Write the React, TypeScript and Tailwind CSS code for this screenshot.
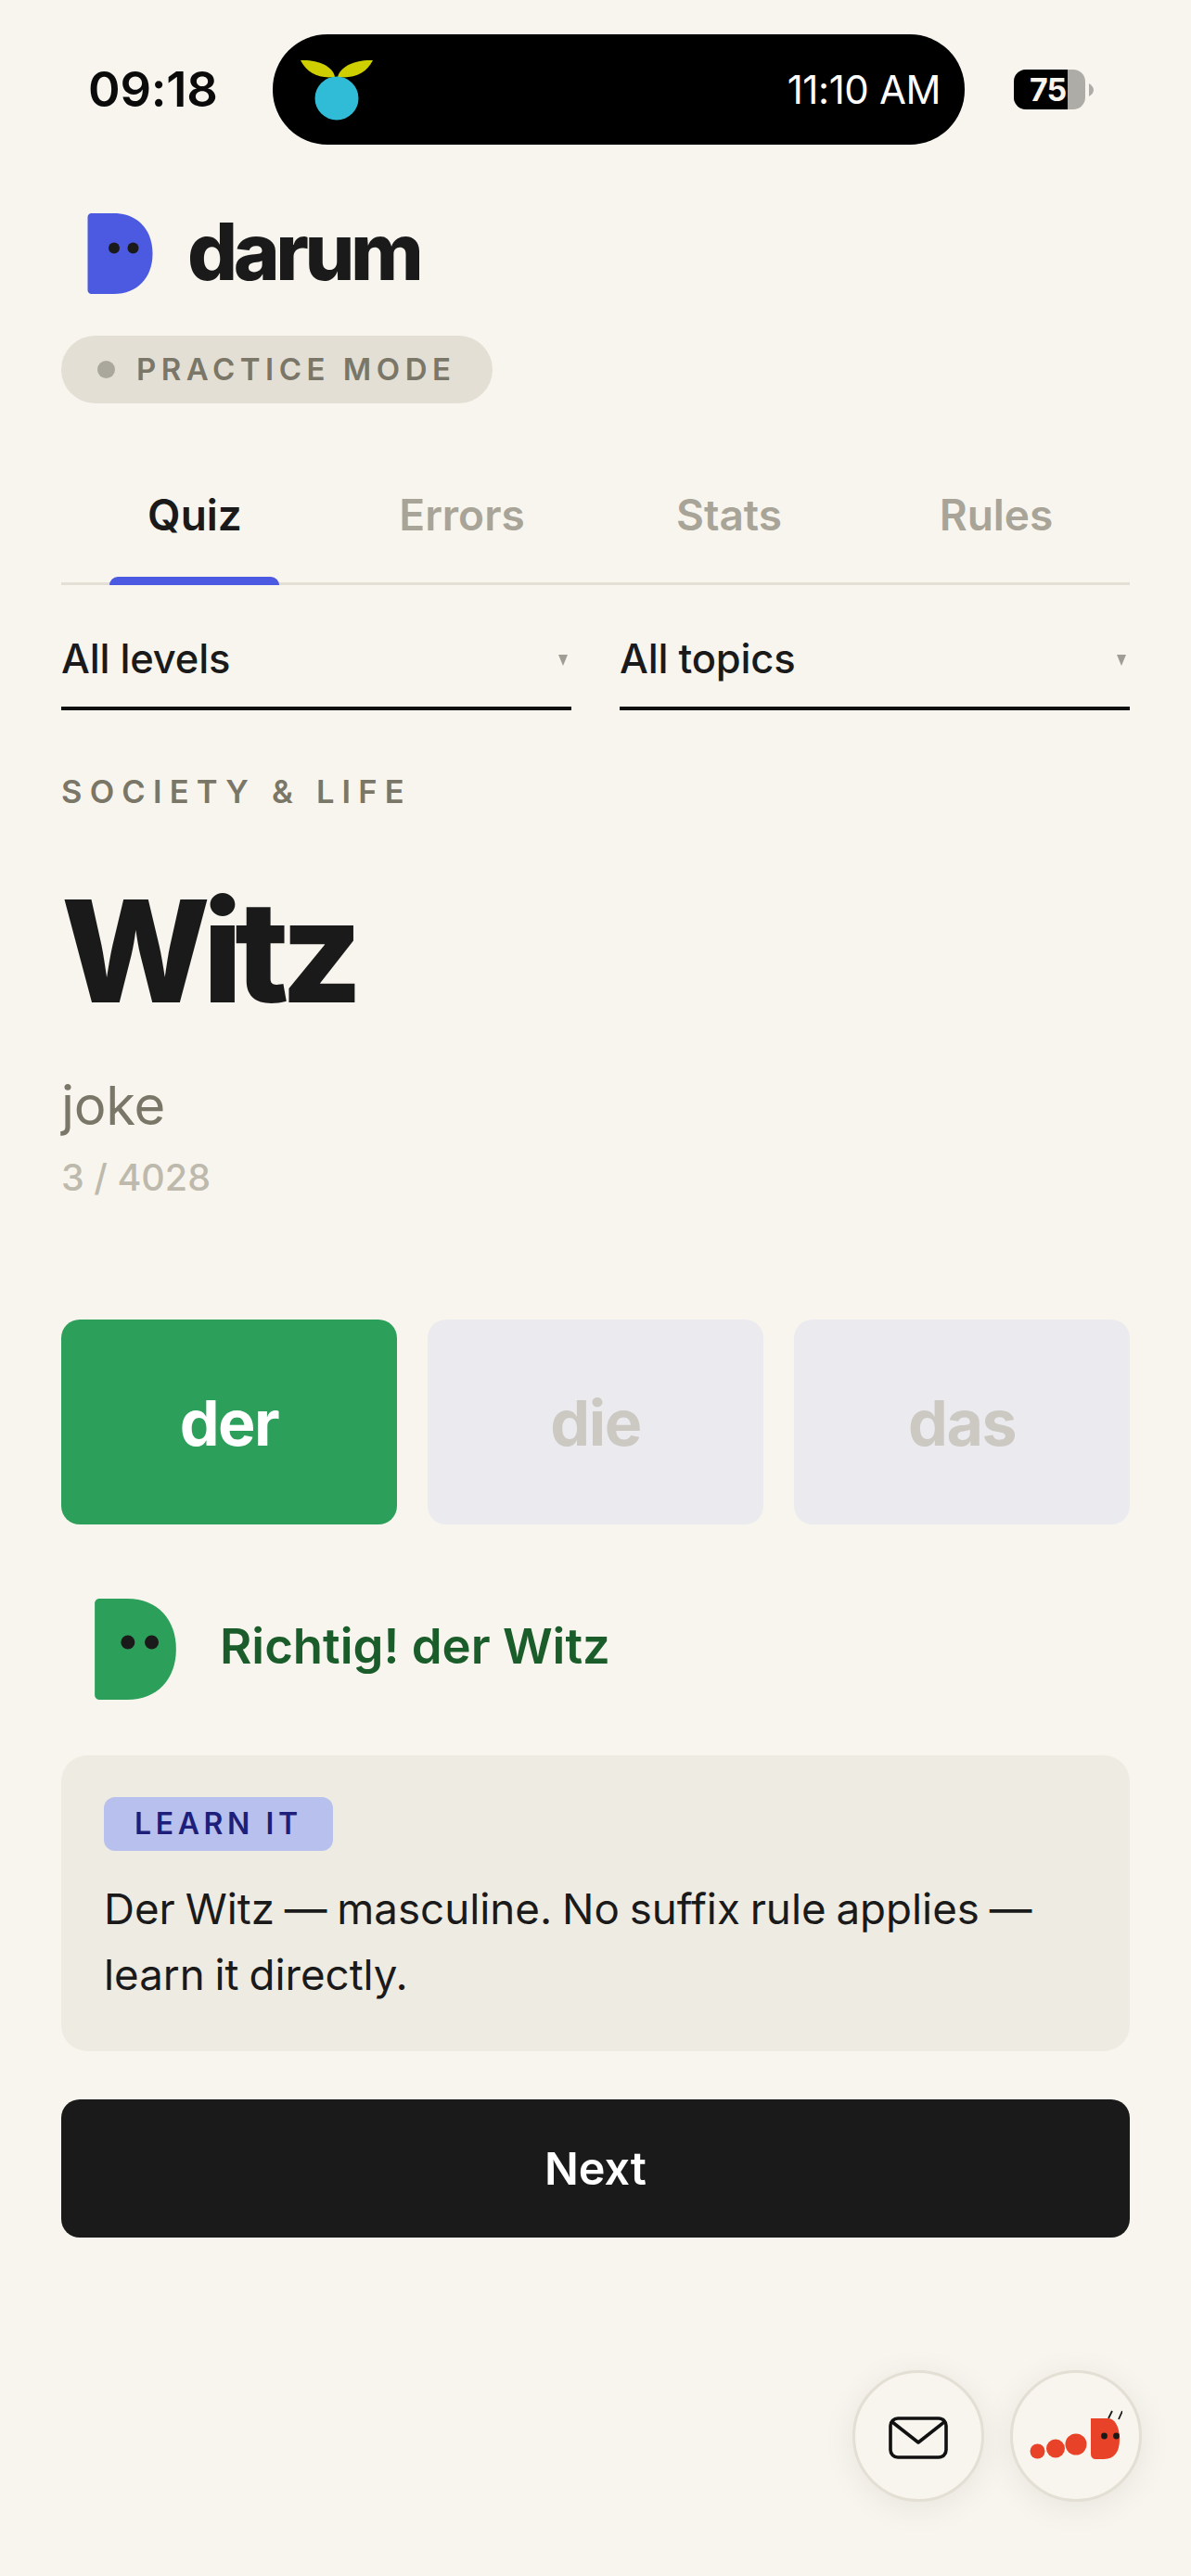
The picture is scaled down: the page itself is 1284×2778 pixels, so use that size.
const TABS = ['Quiz', 'Errors', 'Stats', 'Rules'];

function LogoD({ className, fill }: { className: string; fill: string }) {
  return (
    <svg viewBox="0 0 70 87" className={className}>
      <path d="M4 0H28C54 0 70 18 70 43.5C70 69 54 87 28 87H4C1.8 87 0 85.2 0 83V4C0 1.8 1.8 0 4 0Z" fill={fill} />
      <circle cx="28.5" cy="37.5" r="6" fill="#1a1a1a" />
      <circle cx="49" cy="37.5" r="6" fill="#1a1a1a" />
    </svg>
  );
}

function Select({ label }: { label: string }) {
  return (
    <div className="flex-1 h-[94px] border-b-[4px] border-[#0f0f0f] flex items-center justify-between pr-[4px] pb-[13px]">
      <span className="text-[43.5px] font-medium text-[#1a1a1a] tracking-[-0.2px]">{label}</span>
      <svg viewBox="0 0 10 12" className="w-[10px] h-[12px] mt-[2px]">
        <path d="M0 0H10L5 12Z" fill="#a09d94" />
      </svg>
    </div>
  );
}

export default function App() {
  return (
    <div className="relative w-[1284px] min-h-[2778px] overflow-hidden bg-[#f8f5ee] text-[#1a1a1a] font-['Inter',sans-serif]">
      {/* Status bar */}
      <div className="flex items-center h-[119px] mt-[37px] pl-[95px]">
        <span className="w-[199px] text-[52.5px] font-semibold text-[#0b0b0b] tracking-[-0.2px]">09:18</span>
        <div className="w-[746px] h-[119px] rounded-[59px] bg-black flex items-center justify-between pl-[30px] pr-[26px]">
          <svg viewBox="0 0 80 68" className="w-[80px] h-[68px]">
            <path d="M0 0C18 -1 35 6 37 18C20 20 7 14 0 0Z" fill="#cfcf00" transform="translate(0 2)" />
            <path d="M78 0C60 -1 43 6 40 18C58 20 71 14 78 0Z" fill="#cfcf00" transform="translate(0 2)" />
            <circle cx="39" cy="43" r="23.5" fill="#30bcd6" />
          </svg>
          <span className="text-[42px] text-white tracking-[-0.4px]">11:10 AM</span>
        </div>
        <div className="ml-[53px] flex items-center">
          <div className="w-[77px] h-[43px] rounded-[13px] overflow-hidden bg-[#adaca7] flex">
            <div className="w-[58px] h-full bg-black pl-[17px] text-[34px] leading-[43px] font-bold tracking-[-1px] text-[#f8f5ee]">75</div>
          </div>
          <svg viewBox="0 0 5 14" className="w-[5px] h-[14px] ml-[4px]">
            <path d="M0 0C3 2 5 4 5 7C5 10 3 12 0 14Z" fill="#adaca7" />
          </svg>
        </div>
      </div>

      <div className="px-[66px]">
        {/* Brand */}
        <div className="flex items-center mt-[74px] pl-[28px]">
          <LogoD className="w-[71px] h-[87px]" fill="#4b5ae0" />
          <span className="ml-[37px] mb-[4px] text-[85px] leading-[83px] font-extrabold tracking-[-4.5px] text-[#1a1a1a]">darum</span>
        </div>
        <div className="mt-[45px] w-[465px] h-[73px] rounded-full bg-[#e3dfd4] flex items-center pl-[39px]">
          <span className="w-[19px] h-[19px] rounded-full bg-[#aaa79c]" />
          <span className="ml-[23px] text-[33px] font-semibold tracking-[5.5px] text-[#7a7668]">PRACTICE MODE</span>
        </div>

        {/* Tabs */}
        <div className="mt-[50px] grid grid-cols-4 h-[146px] border-b-[3px] border-[#e3dfd4]">
          {TABS.map((t, i) => (
            <div key={t} className="relative flex items-center justify-center pb-[3px]">
              <span className={`text-[46px] font-semibold ${i === 0 ? 'text-[#1a1a1a]' : 'text-[#a8a498]'}`}>{t}</span>
              {i === 0 && (
                <div className="absolute left-[52px] bottom-[-3px] w-[183px] h-[9px] rounded-t-[9px] bg-[#4b5ae0]" />
              )}
            </div>
          ))}
        </div>

        {/* Filters */}
        <div className="flex gap-[52px] mt-[41px]">
          <Select label="All levels" />
          <Select label="All topics" />
        </div>

        {/* Word */}
        <div className="mt-[68px] text-[34.5px] leading-[40px] font-semibold tracking-[8.2px] text-[#7a7668]">SOCIETY &amp; LIFE</div>
        <div className="mt-[76px] text-[152px] leading-[152px] font-extrabold tracking-[-8.4px] text-[#1a1a1a]">Witz</div>
        <div className="mt-[54px] text-[58px] leading-[72px] tracking-[-0.3px] text-[#7a7668]">joke</div>
        <div className="mt-[17px] text-[39.5px] leading-[50px] font-medium text-[#bdb9ad]">3 / 4028</div>

        {/* Article buttons */}
        <div className="mt-[128px] grid grid-cols-3 gap-[33px]">
          <div className="h-[221px] rounded-[20px] bg-[#2ca05a] flex items-center justify-center text-[68px] font-bold text-white tracking-[-1.5px]">der</div>
          <div className="h-[221px] rounded-[20px] bg-[#ebebef] flex items-center justify-center text-[68px] font-bold text-[#cbc9c2] tracking-[-1.5px]">die</div>
          <div className="h-[221px] rounded-[20px] bg-[#ebebef] flex items-center justify-center text-[68px] font-bold text-[#cbc9c2] tracking-[-1.5px]">das</div>
        </div>

        {/* Feedback */}
        <div className="flex items-center mt-[80px] pl-[36px]">
          <LogoD className="w-[88px] h-[109px]" fill="#2ca05a" />
          <span className="ml-[47px] mb-[6px] text-[52.7px] font-semibold text-[#1a5c2a]">Richtig! der Witz</span>
        </div>

        {/* Explanation */}
        <div className="mt-[60px] rounded-[28px] bg-[#eeebe3] px-[46px] pt-[45px] pb-[47px]">
          <span className="inline-flex items-center h-[58px] px-[33px] rounded-[12px] bg-[#b8c0ee] text-[32px] font-semibold tracking-[4.6px] text-[#1e1f7a]">LEARN IT</span>
          <p className="mt-[27px] text-[45.7px] leading-[71px] [word-spacing:-2px] text-[#1a1a1a]">Der Witz — masculine. No suffix rule applies — learn it directly.</p>
        </div>

        <div className="mt-[52px] h-[149px] pt-[2px] rounded-[20px] bg-[#1a1a1a] flex items-center justify-center text-[48.5px] font-semibold text-white">Next</div>
      </div>

      {/* Floating buttons */}
      <div className="absolute left-[919px] top-[2556px] flex gap-[28px]">
        <div className="w-[142px] h-[142px] rounded-full border-[3px] border-[#e3dfd4] bg-[#f8f5ee] shadow-[0_6px_36px_rgba(0,0,0,0.07)] flex items-center justify-center">
          <svg viewBox="0 0 64 46" className="w-[64px] h-[46px] mt-[3px]" fill="none" stroke="#111" strokeWidth="3.6" strokeLinejoin="round">
            <rect x="2" y="2" width="60" height="42" rx="8" />
            <path d="M4 6L32 28L60 6" />
          </svg>
        </div>
        <div className="w-[142px] h-[142px] rounded-full border-[3px] border-[#e3dfd4] bg-[#f8f5ee] shadow-[0_6px_36px_rgba(0,0,0,0.07)] flex items-center justify-center">
          <svg viewBox="0 0 100 56" className="w-[100px] h-[56px]">
            <circle cx="8.5" cy="44.5" r="8" fill="#e84328" />
            <circle cx="28" cy="41.5" r="10" fill="#e84328" />
            <circle cx="50" cy="37" r="11.5" fill="#e84328" />
            <path d="M66 9H84C94 9 97 22 97 32C97 44 92 53 80 53H72C68 53 66 51 66 47Z" fill="#e84328" />
            <circle cx="80.5" cy="28" r="3.4" fill="#1a1a1a" />
            <circle cx="93.5" cy="28" r="3.4" fill="#1a1a1a" />
            <path d="M85 9L89 1M96 10L100 1" stroke="#1a1a1a" strokeWidth="1.8" />
          </svg>
        </div>
      </div>
    </div>
  );
}
